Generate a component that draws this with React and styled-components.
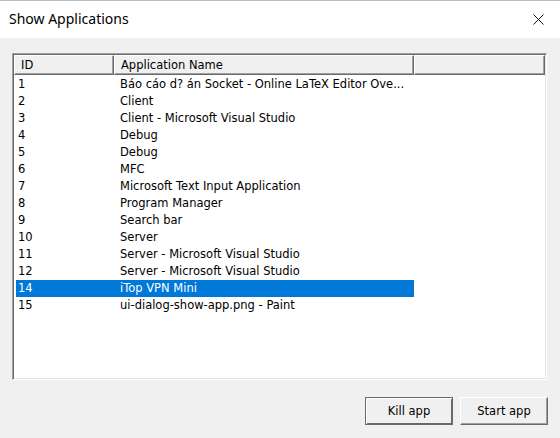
import React from 'react';
import styled, { createGlobalStyle } from 'styled-components';

const GlobalStyle = createGlobalStyle`
  html, body {
    margin: 0;
    padding: 0;
    background: #f0f0f0;
  }
`;

const apps = [
  { id: 1, name: 'Báo cáo d? án Socket - Online LaTeX Editor Ove...' },
  { id: 2, name: 'Client' },
  { id: 3, name: 'Client - Microsoft Visual Studio' },
  { id: 4, name: 'Debug' },
  { id: 5, name: 'Debug' },
  { id: 6, name: 'MFC' },
  { id: 7, name: 'Microsoft Text Input Application' },
  { id: 8, name: 'Program Manager' },
  { id: 9, name: 'Search bar' },
  { id: 10, name: 'Server' },
  { id: 11, name: 'Server - Microsoft Visual Studio' },
  { id: 12, name: 'Server - Microsoft Visual Studio' },
  { id: 14, name: 'iTop VPN Mini' },
  { id: 15, name: 'ui-dialog-show-app.png - Paint' },
];

const SELECTED = 14;

const App = () => {
  return (
    <Dialog>
      <GlobalStyle />
      <TitleBar>
        <Title>Show Applications</Title>
        <CloseButton>
          <svg width="11" height="11" viewBox="0 0 11 11">
            <path d="M0.5 0.5 L10.5 10.5 M10.5 0.5 L0.5 10.5" stroke="#111" strokeWidth="1" />
          </svg>
        </CloseButton>
      </TitleBar>
      <Body>
        <ListBox>
          <Header>
            <HeaderCell width="100px">ID</HeaderCell>
            <HeaderCell width="300px">Application Name</HeaderCell>
            <HeaderCell grow>&nbsp;</HeaderCell>
          </Header>
          <Rows>
            {apps.map((app) => (
              <Row key={app.id} selected={app.id === SELECTED}>
                <IdCell>{app.id}</IdCell>
                <NameCell>{app.name}</NameCell>
              </Row>
            ))}
          </Rows>
        </ListBox>
        <Buttons>
          <Button isDefault>Kill app</Button>
          <Button>Start app</Button>
        </Buttons>
      </Body>
    </Dialog>
  );
};

const Dialog = styled.div`
  width: 560px;
  height: 438px;
  display: flex;
  flex-direction: column;
  background: #f0f0f0;
  border-top: 1px solid #b6c0cc;
  box-sizing: border-box;
  overflow: hidden;
`;

const TitleBar = styled.div`
  height: 37px;
  background: #fff;
  display: flex;
  align-items: center;
  justify-content: space-between;
  padding: 0 0 0 9px;
  flex-shrink: 0;
`;

const Title = styled.div`
  font-family: "Noto Sans", "Open Sans", sans-serif;
  font-size: 14px;
  color: #000;
  margin-top: -2px;
`;

const CloseButton = styled.div`
  width: 44px;
  height: 37px;
  display: flex;
  align-items: center;
  justify-content: center;
`;

const Body = styled.div`
  flex: 1;
  display: flex;
  flex-direction: column;
  padding: 15px 12px 14px 12px;
`;

const ListBox = styled.div`
  width: 535px;
  height: 327px;
  box-sizing: border-box;
  background: #fff;
  border-top: 1px solid #a0a0a0;
  border-left: 1px solid #a0a0a0;
  border-right: 1px solid #fff;
  border-bottom: 1px solid #fff;
  box-shadow: inset 1px 1px 0 #696969, inset -1px -1px 0 #e3e3e3;
  padding: 1px;
  display: flex;
  flex-direction: column;
  font-family: "DejaVu Sans", Tahoma, sans-serif;
  font-size: 11.5px;
  color: #000;
`;

const Header = styled.div`
  display: flex;
  height: 20px;
  flex-shrink: 0;
`;

const HeaderCell = styled.div`
  width: ${(p) => p.width || 'auto'};
  flex: ${(p) => (p.grow ? 1 : 'none')};
  box-sizing: border-box;
  background: #f0f0f0;
  border-top: 1px solid #fff;
  border-left: 1px solid #fff;
  border-right: 1px solid #696969;
  border-bottom: 1px solid #696969;
  box-shadow: inset -1px -1px 0 #a0a0a0;
  padding: 2px 0 0 6px;
  line-height: 15px;
  white-space: nowrap;
`;

const Rows = styled.div`
  display: flex;
  flex-direction: column;
  padding: 1px 0 0 2px;
`;

const Row = styled.div`
  display: flex;
  width: 398px;
  height: 17px;
  line-height: 16px;
  align-items: flex-start;
  background: ${(p) => (p.selected ? '#0078d7' : 'transparent')};
  color: ${(p) => (p.selected ? '#fff' : '#000')};
`;

const IdCell = styled.div`
  width: 98px;
  padding-left: 2px;
  box-sizing: border-box;
`;

const NameCell = styled.div`
  flex: 1;
  padding-left: 6px;
  white-space: nowrap;
`;

const Buttons = styled.div`
  display: flex;
  justify-content: flex-end;
  gap: 7px;
  margin-top: 17px;
`;

const Button = styled.button`
  width: 88px;
  height: 28px;
  box-sizing: border-box;
  background: #f0f0f0;
  font-family: "DejaVu Sans", Tahoma, sans-serif;
  font-size: 11.5px;
  color: #000;
  padding: 0;
  border-top: 1px solid ${(p) => (p.isDefault ? '#696969' : '#fff')};
  border-left: 1px solid ${(p) => (p.isDefault ? '#696969' : '#fff')};
  border-right: 1px solid #696969;
  border-bottom: 1px solid #696969;
  box-shadow: ${(p) =>
    p.isDefault
      ? 'inset 1px 1px 0 #fff, inset -1px -1px 0 #696969'
      : 'inset -1px -1px 0 #a0a0a0'};
`;

export default App;
